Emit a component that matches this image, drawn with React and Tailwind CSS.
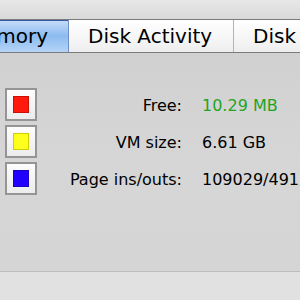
const rows = [
  { label: "Free:", value: "10.29 MB", swatch: "bg-[#ff1a0d] border-[#c81008]", valueColor: "text-[#1fa51f]" },
  { label: "VM size:", value: "6.61 GB", swatch: "bg-[#ffff1e] border-[#cfcf00]", valueColor: "text-black" },
  { label: "Page ins/outs:", value: "109029/49122", swatch: "bg-[#2200ff] border-[#1800c4]", valueColor: "text-black" },
]

const tabs = [
  { name: "Memory", selected: true, width: "w-[69px]" },
  { name: "Disk Activity", selected: false, width: "w-[165px]" },
  { name: "Disk Usage", selected: false, width: "w-[160px]" },
]

export default function App() {
  return (
    <div className="w-[300px] h-[300px] overflow-hidden flex flex-col bg-[#d6d6d6]" style={{ fontFamily: '"DejaVu Sans", Verdana, sans-serif' }}>
      {/* window top strip */}
      <div className="h-[19px] shrink-0 bg-gradient-to-b from-[#e8e8e8] to-[#d9d9d9]" />

      {/* tab bar */}
      <div className="h-[34px] shrink-0 flex overflow-hidden border-t border-b border-[#7b7b7b]">
        {tabs.map((tab) => (
          <div
            key={tab.name}
            className={
              tab.selected
                ? "w-[69px] shrink-0 flex items-center justify-end pr-[20px] whitespace-nowrap text-[20px] text-black border-r border-[#6d8fc4] bg-gradient-to-b from-[#c8ddf8] via-[#8dbbf0] to-[#b4d4f7] shadow-[inset_0_1px_0_#3a5aa8]"
                : tab.width + " shrink-0 flex items-center pl-[19px] whitespace-nowrap text-[20px] text-black border-r border-[#b4b4b4] bg-gradient-to-b from-[#ffffff] via-[#f7f7f7] to-[#eeeeee]"
            }
          >
            {tab.name}
          </div>
        ))}
      </div>

      {/* content */}
      <div className="flex-1 bg-gradient-to-b from-[#d1d1d1] via-[#d6d6d6] to-[#d5d5d5] pt-[35px] pl-[5px]">
        <div className="flex flex-col gap-[4px]">
          {rows.map((row) => (
            <div key={row.label} className="flex items-center h-[33px]">
              <div className="w-[32px] h-[33px] shrink-0 border-2 border-[#959595] bg-gradient-to-b from-[#fdfdfd] to-[#ececec] p-[6px]">
                <div className={"w-full h-full border " + row.swatch} />
              </div>
              <div className="w-[145px] shrink-0 pt-[3px] text-right text-[16px] text-black whitespace-nowrap">{row.label}</div>
              <div className={"ml-[20px] shrink-0 pt-[3px] whitespace-nowrap text-[16px] " + row.valueColor}>{row.value}</div>
            </div>
          ))}
        </div>
      </div>

      {/* bottom bar */}
      <div className="h-[29px] shrink-0 border-t border-[#bdbdbd] bg-[#e1e1e1]" />
    </div>
  )
}
